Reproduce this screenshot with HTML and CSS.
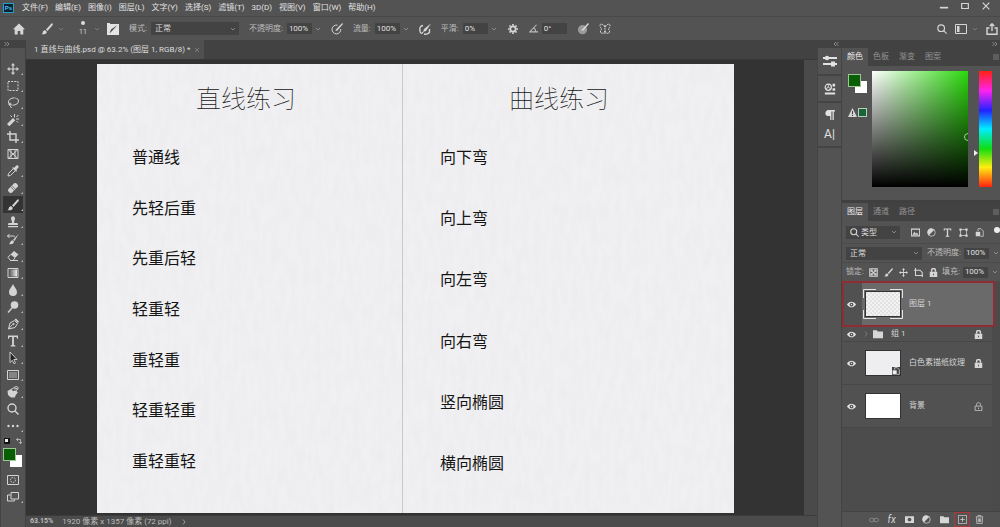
FILE: index.html
```html
<!DOCTYPE html>
<html lang="zh-CN">
<head>
<meta charset="utf-8">
<title>直线与曲线.psd</title>
<link rel="stylesheet" href="styles.css">
</head>
<body>
<svg class="sprite" aria-hidden="true">
  <symbol id="move" viewBox="0 0 12 12"><path d="M6 0l2 2.500H6.600V5.400H9.500V4L12 6 9.500 8V6.600H6.600v2.900H8L6 12 4 9.500h1.400V6.600H2.500V8L0 6l2.500-2v1.400h2.900V2.500H4z"/></symbol>
  <symbol id="marquee" viewBox="0 0 12 12"><path class="ln" d="M1 1.500h10v9H1z" stroke-dasharray="2 1.200"/></symbol>
  <symbol id="lasso" viewBox="0 0 12 12"><ellipse class="ln" cx="6.500" cy="4.500" rx="5" ry="3.500" transform="rotate(-12 6.500 4.500)"/><path class="ln" d="M2 6.500c-1 2 2 2 2 .5s-2-1-1 1.500l1.500 2.500"/></symbol>
  <symbol id="wand" viewBox="0 0 12 12"><path d="M0 10L6 4l2.300 2.300-6 6z"/><path class="ln" d="M7.500 3.500V0M9 5h3M9.500 3L11.500 1M5 3L3.500 1.500M9.500 7l1.500 1.500"/></symbol>
  <symbol id="crop" viewBox="0 0 12 12"><path class="ln2" d="M3 0v9h9M0 3h9v9"/></symbol>
  <symbol id="frame" viewBox="0 0 12 12"><path class="ln" d="M1 1.500h10v9H1zM1 1.500l10 9M11 1.500l-10 9M4 1.500h4v9H4z"/></symbol>
  <symbol id="dropper" viewBox="0 0 12 12"><path d="M7 3l2-2.300c1.500-1.500 3.500.5 2.200 2L9.300 5l.8.800-1 1L5.200 3l1-1z"/><path class="ln" d="M6 4L1.500 8.500 1 11l2.500-.5L8 6"/></symbol>
  <symbol id="heal" viewBox="0 0 12 12"><path d="M1.300 7.200L7.200 1.300c1.500-1.500 5 2 3.500 3.500l-5.900 5.900c-1.500 1.500-5-2-3.500-3.500z"/><path class="cut" d="M3.800 5L7 8.200M5 3.800L8.200 7"/></symbol>
  <symbol id="brush" viewBox="0 0 12 12"><path d="M11.500.500c.7.600.3 1.200-.2 1.900L6.500 8 5 6.600 10 1c.500-.5 1-.9 1.500-.500zM4.300 7.200l1.500 1.500c.2 2.300-2.500 3-5.500 2.500 1.600-.7 1.200-1.500 1.700-2.700.4-1 1.400-1.300 2.300-1.300z"/></symbol>
  <symbol id="stamp" viewBox="0 0 12 12"><path d="M4 2.500C4-.5 8-.5 8 2.500 8 4 7 4.500 7 7h3.500l.5 2H1l.5-2H5C5 4.500 4 4 4 2.500zM1 10h10v1.200H1z"/></symbol>
  <symbol id="history" viewBox="0 0 12 12"><path d="M11.800.8L7.500 8 6 7zM5.500 7.200l1.500 1.500C6.500 11 4 11.500 2 11c1.500-1 1-3 3.500-3.800z"/><path class="ln" d="M0 3h6M2.500 1L.7 3l1.800 2M6 3c1 0 2 0 2 1.500"/></symbol>
  <symbol id="eraser" viewBox="0 0 12 12"><path d="M7 1l4.500 3.500L8 8 3.500 4.500z"/><path class="ln" d="M3.500 4.500L1 7.300 3.500 10.500H6L8 8M3 10.500h8"/></symbol>
  <symbol id="gradient" viewBox="0 0 12 12"><defs><linearGradient id="gr"><stop offset="0" stop-color="#555"/><stop offset="1" stop-color="#eee"/></linearGradient></defs><path class="ln" d="M1 1.500h10v9H1z"/><path fill="url(#gr)" d="M2 2.500h8v7H2z"/></symbol>
  <symbol id="drop" viewBox="0 0 12 12"><path d="M6 0c1 3 4 5 4 8a4 4 0 0 1-8 0c0-3 3-5 4-8z"/></symbol>
  <symbol id="dodge" viewBox="0 0 12 12"><circle cx="7.500" cy="4" r="3.800"/><path class="ln2" d="M5 7l-4 4.500"/></symbol>
  <symbol id="pen" viewBox="0 0 12 12"><path class="ln" d="M1.500 11L3 5l4.500-2.500 3 3L8 9.500 1.500 11l4-4.500"/><circle cx="6.500" cy="6" r="1"/><path d="M7.500 1.500L9 .500l3 3.200-1 1.300z"/></symbol>
  <symbol id="type" viewBox="0 0 12 12"><path d="M1 .500h10v3.200h-1L9.600 1.900H6.900V10l1.500.5v1H3.600v-1L5.100 10V1.900H2.400L2 3.700H1z"/></symbol>
  <symbol id="arrow" viewBox="0 0 12 12"><path d="M3 0l7 7.500H6.800L8.500 11l-1.500.8-1.700-3.500L3 10.500z" fill="#222" stroke="#ccc"/></symbol>
  <symbol id="rect" viewBox="0 0 12 12"><path class="ln" d="M.5 1.500h11v9H.5z"/><path d="M2 3h8v6H2z" fill="#858585"/></symbol>
  <symbol id="rotate3d" viewBox="0 0 12 12"><path d="M.5 5l3.500-2 2 2 3-.5 1.800 2-2 2.500-1 2.500H4L1 9z"/><path class="ln" d="M4 3.500L8 1c2-1 3.500 0 3 2L9 4.500M7 3l3-.5"/></symbol>
  <symbol id="search" viewBox="0 0 12 12"><circle class="ln2" cx="5" cy="5" r="4"/><path class="ln2" d="M8 8l3.500 3.500"/></symbol>
  <symbol id="more" viewBox="0 0 12 12"><circle cx="1.500" cy="6" r="1.200"/><circle cx="6" cy="6" r="1.200"/><circle cx="10.500" cy="6" r="1.200"/></symbol>
  <symbol id="mask" viewBox="0 0 12 12"><path class="ln" d="M.5 1.500h11v9H.5z"/><circle class="ln" cx="6" cy="6" r="2.500" stroke-dasharray="1.500 1"/></symbol>
  <symbol id="screen" viewBox="0 0 12 12"><path class="ln" d="M4 1.500h7.500V8H4zM3.500 4H.5v6h7V8.500"/></symbol>
  <symbol id="home" viewBox="0 0 12 12"><path d="M6 .500L12 6.300h-1.700V11.500H7.300V8H4.700v3.500h-3V6.300H0z"/></symbol>
  <symbol id="preset" viewBox="0 0 12 12"><path d="M0 0h3v1h9v11H0z"/><path d="M10.500 2L5 8l-2.500 2.500L4 6.500z" fill="#484848"/></symbol>
  <symbol id="pressure" viewBox="0 0 12 12"><path class="ln" d="M6.500 2.200A4.400 4.400 0 1 0 9.800 6"/><path d="M11.300 0L12 1 6.500 7.500 4.500 8l.7-1.800z"/></symbol>
  <symbol id="pressurefill" viewBox="0 0 12 12"><circle cx="5.500" cy="6.700" r="4.600" fill="#9a9a9a"/><path d="M11 0L12 1 6.500 7.500 4.500 8l.7-1.800z"/></symbol>
  <symbol id="airbrush" viewBox="0 0 12 12"><path class="ln2" d="M4 2.500C1 3 .5 5 1 8s2 3 3 1M5 11c2 .5 5 0 5.500-2V6"/><path d="M12 .500L7 8l-3 1 1-3z"/></symbol>
  <symbol id="gear" viewBox="0 0 12 12"><circle class="ln3" cx="6" cy="6" r="3.200"/><path class="ln3" d="M6 0v2M6 10v2M0 6h2M10 6h2M1.800 1.800l1.300 1.300M8.900 8.900l1.300 1.300M1.800 10.200l1.300-1.300M8.900 3.100l1.300-1.300"/></symbol>
  <symbol id="angle" viewBox="0 0 12 12"><path class="ln2" d="M10 1L1 10.500h11M6 5c2 1 3 3 3 5.500"/></symbol>
  <symbol id="butterfly" viewBox="0 0 12 12"><path class="ln" d="M6 2v9M6 4C4 1 1 0 1 2.500S3 6 3 6s-2 1-1.500 3S5 11 6 8M6 4c2-3 5-4 5-1.500S9 6 9 6s2 1 1.500 3S7 11 6 8" stroke-dasharray="2 .7"/></symbol>
  <symbol id="workspace" viewBox="0 0 12 12"><path class="ln" d="M.5 1.500h11v9H.5z"/><path d="M2 3h2.500v6H2z"/></symbol>
  <symbol id="share" viewBox="0 0 12 12"><path class="ln2" d="M3.500 5H1v6.300h10V5H8.500M6 8V1M3.800 3L6 .800 8.200 3"/></symbol>
  <symbol id="caret" viewBox="0 0 12 12"><path class="ln2" d="M2 4l4 4 4-4"/></symbol>
  <symbol id="chev" viewBox="0 0 12 12"><path class="ln2" d="M1 2l4 4-4 4M6 2l4 4-4 4"/></symbol>
  <symbol id="right" viewBox="0 0 12 12"><path class="ln2" d="M4 1l4 5-4 5"/></symbol>
  <symbol id="menu" viewBox="0 0 12 12"><path class="ln2" d="M0 2h12M0 6h12M0 10h12"/></symbol>
  <symbol id="sliders" viewBox="0 0 14 14"><path class="ln3" d="M0 4h14M0 10h14"/><circle cx="4" cy="4" r="2.200"/><path d="M8 7.500h4v5H8z"/></symbol>
  <symbol id="library" viewBox="0 0 14 14"><circle class="ln2" cx="5" cy="5" r="3.600"/><path class="ln" d="M5 2v3l2.500 1.500M5 5L2.500 6.500"/><path d="M10 1h3v3h-3zM10 6h3v3h-3zM1 11h12v2.500H1z"/></symbol>
  <symbol id="para" viewBox="0 0 12 12"><path d="M11 1v1.500H9.800V11H8.500V2.500H7.400V11H6.200V7C2 7.500 1 5.500 1.500 3.500S3.500 1 5 1z"/></symbol>
  <symbol id="warn" viewBox="0 0 12 12"><path d="M6 0l6 12H0z"/><path d="M5.300 4h1.400v4H5.300zM5.300 9h1.400v1.500H5.300z" fill="#444"/></symbol>
  <symbol id="image" viewBox="0 0 12 12"><path class="ln2" d="M.5 1.500h11v9H.5z"/><path d="M2 9l2.500-4 2 2.500L8 6l2 3z"/></symbol>
  <symbol id="half" viewBox="0 0 12 12"><circle class="ln" cx="6" cy="6" r="5"/><path d="M9.500 2.500A5 5 0 1 0 2.500 9.500z"/></symbol>
  <symbol id="shape" viewBox="0 0 12 12"><path class="ln" d="M2 2h8v8H2z"/><path d="M.5.500h3v3h-3zM8.500.500h3v3h-3zM.5 8.500h3v3h-3zM8.500 8.500h3v3h-3z"/></symbol>
  <symbol id="smart" viewBox="0 0 12 12"><path class="ln" d="M4 4V1h4l3 3v7H7"/><path d="M1 5h6v6H1z"/></symbol>
  <symbol id="checker" viewBox="0 0 12 12"><path class="ln2" d="M1 1h10v10H1z"/><path d="M2 2h3v3H2zM7 2h3v3H7zM4.500 4.500h3v3h-3zM2 7h3v3H2zM7 7h3v3H7z"/></symbol>
  <symbol id="artboard" viewBox="0 0 12 12"><path class="ln2" d="M2 0v10h10M0 3h8l3 3v6"/></symbol>
  <symbol id="lock" viewBox="0 0 12 12"><path d="M1 5h10v7H1z"/><path class="ln3" d="M3.500 5V3c0-3 5-3 5 0v2"/><path d="M5.400 7.500h1.200v2H5.400z" fill="#444"/></symbol>
  <symbol id="lockopen" viewBox="0 0 12 12"><path class="ln" d="M1.500 5.500h9v6h-9zM3.500 5V3c0-3 5-3 5 0v2M6 7.500v2"/></symbol>
  <symbol id="eye" viewBox="0 0 12 12"><path d="M0 6c3-5 9-5 12 0-3 5-9 5-12 0z"/><circle cx="6" cy="6" r="2.500" fill="#4b4b4b"/><circle cx="6" cy="6" r="1"/></symbol>
  <symbol id="folder" viewBox="0 0 12 12"><path d="M0 1.500h4.500l1.200 1.500H12v8H0z"/></symbol>
  <symbol id="link" viewBox="0 0 12 12"><ellipse class="ln" cx="3.500" cy="6" rx="3" ry="2.200"/><ellipse class="ln" cx="8.500" cy="6" rx="3" ry="2.200"/></symbol>
  <symbol id="addmask" viewBox="0 0 12 12"><path fill-rule="evenodd" d="M0 1.500h12v9H0zM6 3.500a2.500 2.500 0 1 0 .01 0z"/></symbol>
  <symbol id="plus" viewBox="0 0 12 12"><path class="ln" d="M.5.500h11v11H.5zM6 3v6M3 6h6"/></symbol>
  <symbol id="trash" viewBox="0 0 12 12"><path class="ln" d="M1 2.500h10M4 2V.500h4V2M2 3l.5 8.500h7L10 3M4.500 4.500v5M6 4.500v5M7.500 4.500v5"/></symbol>
  <symbol id="close" viewBox="0 0 12 12"><path class="ln2" d="M2 2l8 8M10 2L2 10"/></symbol>
  <symbol id="minus" viewBox="0 0 12 12"><path class="ln3" d="M1 8h10"/></symbol>
  <symbol id="max" viewBox="0 0 12 12"><path class="ln2" d="M2 3h8v6H2z"/></symbol>
  <symbol id="swap" viewBox="0 0 12 12"><path class="ln2" d="M4 0L1 3l3 3M1 3h8v8M6 8l3 3.500L12 8"/></symbol>
  <symbol id="corners" viewBox="0 0 40 30"><path class="ln" d="M.5 9V.5H13M27 .5h12.500V9M39.500 21v8.500H27M13 29.500H.5V21"/></symbol>
</svg>

<div class="app">
  <header class="menubar">
    <span class="logo">Ps</span>
    <nav class="menus" aria-label="主菜单">
      <button>文件(F)</button><button>编辑(E)</button><button>图像(I)</button><button>图层(L)</button><button>文字(Y)</button><button>选择(S)</button><button>滤镜(T)</button><button>3D(D)</button><button>视图(V)</button><button>窗口(W)</button><button>帮助(H)</button>
    </nav>
    <div class="winbtns">
      <button aria-label="最小化"><svg class="i10"><use href="#minus"/></svg></button>
      <button aria-label="最大化"><svg class="i10"><use href="#max"/></svg></button>
      <button aria-label="关闭"><svg class="i10"><use href="#close"/></svg></button>
    </div>
  </header>

  <section class="options" aria-label="画笔选项">
    <button class="home" aria-label="主页"><svg class="i12"><use href="#home"/></svg></button>
    <button class="opt" aria-label="画笔工具"><svg class="i12"><use href="#brush"/></svg><svg class="i6 dim"><use href="#caret"/></svg></button>
    <button class="opt size" aria-label="画笔大小 11"><span class="tip"><i class="dot"></i>11</span><svg class="i6 dim"><use href="#caret"/></svg></button>
    <button class="icon preset" aria-label="画笔设置"><svg class="i12"><use href="#preset"/></svg></button>
    <span class="field"><label for="mode">模式:</label><span class="drop mode"><select id="mode" class="sel"><option>正常</option></select><svg class="i6"><use href="#caret"/></svg></span></span>
    <span class="field"><label for="op">不透明度:</label><span class="num"><input id="op" value="100%"><svg class="i6"><use href="#caret"/></svg></span></span>
    <button class="icon" aria-label="不透明度压力"><svg class="i12"><use href="#pressure"/></svg></button>
    <span class="field"><label for="flow">流量:</label><span class="num"><input id="flow" value="100%"><svg class="i6"><use href="#caret"/></svg></span></span>
    <button class="icon" aria-label="喷枪"><svg class="i12"><use href="#airbrush"/></svg></button>
    <span class="field"><label for="smooth">平滑:</label><span class="num"><input id="smooth" value="0%"><svg class="i6"><use href="#caret"/></svg></span></span>
    <button class="icon" aria-label="平滑选项"><svg class="i10"><use href="#gear"/></svg></button>
    <span class="field angle"><label for="angle" aria-label="角度"><svg class="i8"><use href="#angle"/></svg></label><input id="angle" value="0°"></span>
    <button class="icon" aria-label="大小压力"><svg class="i12"><use href="#pressurefill"/></svg></button>
    <button class="icon" aria-label="对称"><svg class="i12"><use href="#butterfly"/></svg></button>
    <span class="right">
      <button aria-label="搜索"><svg class="i10"><use href="#search"/></svg></button>
      <button class="opt" aria-label="工作区"><svg class="i12"><use href="#workspace"/></svg><svg class="i6 dim"><use href="#caret"/></svg></button>
      <button aria-label="共享"><svg class="i12"><use href="#share"/></svg></button>
    </span>
  </section>

  <div class="body">
    <aside class="tools" aria-label="工具">
      <div class="grip"><svg class="i6"><use href="#chev"/></svg></div>
      <div class="toolset">
        <button class="tool fly" aria-label="移动"><svg><use href="#move"/></svg></button>
        <button class="tool fly" aria-label="选框"><svg><use href="#marquee"/></svg></button>
        <button class="tool fly" aria-label="套索"><svg><use href="#lasso"/></svg></button>
        <button class="tool fly" aria-label="魔棒"><svg><use href="#wand"/></svg></button>
        <button class="tool fly" aria-label="裁剪"><svg><use href="#crop"/></svg></button>
        <button class="tool" aria-label="图框"><svg><use href="#frame"/></svg></button>
        <button class="tool fly" aria-label="吸管"><svg><use href="#dropper"/></svg></button>
        <button class="tool fly" aria-label="修复"><svg><use href="#heal"/></svg></button>
        <button class="tool fly on" aria-label="画笔"><svg><use href="#brush"/></svg></button>
        <button class="tool fly" aria-label="图章"><svg><use href="#stamp"/></svg></button>
        <button class="tool fly" aria-label="历史画笔"><svg><use href="#history"/></svg></button>
        <button class="tool fly" aria-label="橡皮擦"><svg><use href="#eraser"/></svg></button>
        <button class="tool fly" aria-label="渐变"><svg><use href="#gradient"/></svg></button>
        <button class="tool fly" aria-label="模糊"><svg><use href="#drop"/></svg></button>
        <button class="tool fly" aria-label="减淡"><svg><use href="#dodge"/></svg></button>
        <button class="tool fly" aria-label="钢笔"><svg><use href="#pen"/></svg></button>
        <button class="tool fly" aria-label="文字"><svg><use href="#type"/></svg></button>
        <button class="tool fly" aria-label="路径选择"><svg><use href="#arrow"/></svg></button>
        <button class="tool fly" aria-label="矩形"><svg><use href="#rect"/></svg></button>
        <button class="tool fly" aria-label="抓手"><svg><use href="#rotate3d"/></svg></button>
        <button class="tool" aria-label="缩放"><svg><use href="#search"/></svg></button>
        <button class="tool fly" aria-label="更多"><svg><use href="#more"/></svg></button>
      </div>
      <div class="reset"><button class="mini" aria-label="默认颜色"><i></i></button><button aria-label="交换颜色"><svg class="i6"><use href="#swap"/></svg></button></div>
      <div class="swatches"><button class="fg" aria-label="前景色"></button><button class="bg" aria-label="背景色"></button></div>
      <button class="tool" aria-label="快速蒙版"><svg><use href="#mask"/></svg></button>
      <button class="tool fly" aria-label="屏幕模式"><svg><use href="#screen"/></svg></button>
    </aside>

    <main class="work">
      <div class="tabs"><div class="doctab"><span>1 直线与曲线.psd @ 63.2% (图层 1, RGB/8) *</span><button aria-label="关闭文档"><svg class="i6 dim"><use href="#close"/></svg></button></div></div>
      <div class="view">
        <div class="stage">
          <article class="paper">
            <svg class="grain" aria-hidden="true"><filter id="fiber"><feTurbulence type="fractalNoise" baseFrequency=".16 .05" numOctaves="3" seed="4"/><feColorMatrix values="0 0 0 0 .45  0 0 0 0 .45  0 0 0 0 .48  .12 0 0 0 -.04"/></filter><rect width="100%" height="100%" filter="url(#fiber)"/></svg>
            <section class="page first"><h1>直线练习</h1><ul><li>普通线</li><li>先轻后重</li><li>先重后轻</li><li>轻重轻</li><li>重轻重</li><li>轻重轻重</li><li>重轻重轻</li></ul></section>
            <section class="page"><h1>曲线练习</h1><ul><li>向下弯</li><li>向上弯</li><li>向左弯</li><li>向右弯</li><li>竖向椭圆</li><li>横向椭圆</li></ul></section>
          </article>
        </div>
        <div class="scroll"></div>
      </div>
      <footer class="status"><b>63.15%</b><span>1920 像素 x 1357 像素 (72 ppi)</span><svg class="i6"><use href="#right"/></svg></footer>
    </main>

    <aside class="dock">
      <div class="grip end"><svg class="i6 flip"><use href="#chev"/></svg></div>
      <div class="dockbox"><button aria-label="属性"><svg class="i14"><use href="#sliders"/></svg></button></div>
      <div class="dockbox"><button aria-label="库"><svg class="i12"><use href="#library"/></svg></button></div>
      <div class="dockbox"><button aria-label="段落"><svg class="i12"><use href="#para"/></svg></button><button class="char" aria-label="字符">A|</button></div>
    </aside>

    <aside class="panels">
      <div class="grip end"><svg class="i6"><use href="#chev"/></svg></div>
      <section class="colorpanel">
        <div class="ptabs"><button class="on">颜色</button><button>色板</button><button>渐变</button><button>图案</button><svg class="i6 pm"><use href="#menu"/></svg></div>
        <div class="picker">
          <div class="chips"><div class="swatches"><button class="fg" aria-label="前景色"></button><button class="bg" aria-label="背景色"></button></div><div class="gamut"><svg class="i8"><use href="#warn"/></svg><i></i></div></div>
          <div class="sv"><i class="ring"></i></div>
          <div class="hue"><i class="knob"></i></div>
        </div>
      </section>
      <section class="layers">
        <div class="ptabs"><button class="on">图层</button><button>通道</button><button>路径</button><svg class="i6 pm"><use href="#menu"/></svg></div>
        <div class="row filter"><span class="drop kind"><svg class="i8 lens"><use href="#search"/></svg><select class="sel" aria-label="过滤类型"><option>类型</option></select><svg class="i6"><use href="#caret"/></svg></span>
          <span class="ficons"><svg class="i8"><use href="#image"/></svg><svg class="i8"><use href="#half"/></svg><svg class="i8"><use href="#type"/></svg><svg class="i8"><use href="#shape"/></svg><svg class="i8"><use href="#smart"/></svg></span><i class="toggle"></i></div>
        <div class="row"><span class="drop blend"><select class="sel" aria-label="混合模式"><option>正常</option></select><svg class="i6"><use href="#caret"/></svg></span><label for="lop">不透明度:</label><span class="num"><input id="lop" value="100%"><svg class="i6"><use href="#caret"/></svg></span></div>
        <div class="row locks"><span>锁定:</span><span class="licons"><svg class="i8"><use href="#checker"/></svg><svg class="i8"><use href="#brush"/></svg><svg class="i8"><use href="#move"/></svg><svg class="i8"><use href="#artboard"/></svg><svg class="i8"><use href="#lock"/></svg></span><label for="fill">填充:</label><span class="num"><input id="fill" value="100%"><svg class="i6"><use href="#caret"/></svg></span></div>
        <ul class="list">
          <li class="layer sel1"><svg class="i8 eye"><use href="#eye"/></svg><div class="lbody"><span class="thumb clear"><svg class="corners"><use href="#corners"/></svg></span><span class="name">图层 1</span></div></li>
          <li class="layer group"><svg class="i8 eye"><use href="#eye"/></svg><div class="lbody"><svg class="i6 dim"><use href="#right"/></svg><svg class="i10"><use href="#folder"/></svg><span class="name">组 1</span><svg class="i8"><use href="#lock"/></svg></div></li>
          <li class="layer"><svg class="i8 eye"><use href="#eye"/></svg><div class="lbody"><span class="thumb tex"><svg class="badge"><use href="#smart"/></svg></span><span class="name">白色素描纸纹理</span><svg class="i8"><use href="#lock"/></svg></div></li>
          <li class="layer"><svg class="i8 eye"><use href="#eye"/></svg><div class="lbody"><span class="thumb white"></span><span class="name">背景</span><svg class="i8"><use href="#lockopen"/></svg></div></li>
        </ul>
        <div class="actions">
          <button class="dim" aria-label="链接"><svg class="i10"><use href="#link"/></svg></button>
          <button class="fx" aria-label="图层样式">fx</button>
          <button aria-label="添加蒙版"><svg class="i8"><use href="#addmask"/></svg></button>
          <button aria-label="调整图层"><svg class="i8"><use href="#half"/></svg></button>
          <button aria-label="新建组"><svg class="i8"><use href="#folder"/></svg></button>
          <button class="marked" aria-label="新建图层"><svg class="i8"><use href="#plus"/></svg></button>
          <button aria-label="删除"><svg class="i8"><use href="#trash"/></svg></button>
        </div>
      </section>
    </aside>
  </div>
</div>
</body>
</html>
```
FILE: styles.css
```css
* { box-sizing: border-box; }
body {
  margin: 0;
  background: #535353;
  color: #d6d6d6;
  font: 8px/12px Roboto, "Noto Sans CJK SC", sans-serif;
}
button, input, select { font: inherit; color: inherit; border: 0; margin: 0; padding: 0; background: none; }
button { display: flex; align-items: center; justify-content: center; white-space: nowrap; }
ul { list-style: none; margin: 0; padding: 0; }
svg { display: block; flex: none; fill: currentColor; }
.sprite { position: absolute; width: 0; height: 0; }
.ln, .ln2, .ln3, .cut { fill: none; stroke: currentColor; stroke-width: 1; }
.ln2 { stroke-width: 1.4; }
.ln3 { stroke-width: 2; }
.cut { stroke: #777; }
.i6 { width: 6px; height: 6px; }
.i8 { width: 9px; height: 9px; }
.i10 { width: 10px; height: 10px; }
.i12 { width: 12px; height: 12px; }
.i14 { width: 14px; height: 14px; }
.dim { color: #8c8c8c; }
.flip { transform: scaleX(-1); }

.app { display: flex; flex-direction: column; height: 100vh; }

/* Menu bar */
.menubar { display: flex; align-items: center; height: 17px; padding-left: 3px; border-bottom: 1px solid #484848; }
.logo { width: 11px; height: 10px; border: 1px solid #2a9fc9; background: #0a2333; color: #4fc3ee; font: bold 6px/8px "Liberation Sans", sans-serif; text-align: center; }
.menus { display: flex; gap: 7px; margin-left: 8px; color: #e2e2e2; }
.winbtns { display: flex; gap: 11px; margin: 0 9px 5px auto; }

/* Options bar */
.options { display: flex; align-items: center; gap: 10px; height: 23px; padding: 0 2px 0 13px; }
.home { margin-right: 6px; }
.opt { gap: 5px; }
.opt.size { margin: 0 -3px 0 3px; }
.tip { display: flex; flex-direction: column; align-items: center; width: 12px; font-size: 7px; line-height: 8px; }
.dot { width: 4px; height: 4px; margin: 0 0 3px; border-radius: 50%; background: #ddd; }
.preset { color: #e4e4e4; }
.field { display: flex; align-items: center; gap: 4px; color: #bdbdbd; }
.drop { display: flex; align-items: center; height: 13px; padding-right: 3px; background: #434343; color: #a5a5a5; }
.sel { appearance: none; flex: 1; min-width: 0; height: 13px; padding: 0 4px; line-height: 13px; color: #dedede; }
.mode { width: 88px; }
.num { display: flex; align-items: center; gap: 3px; color: #a5a5a5; }
.num input, .angle input { width: 25px; height: 11px; padding: 0 2px; background: #434343; color: #e0e0e0; }
.icon { width: 12px; }
.options .right { display: flex; align-items: center; gap: 8px; margin-left: auto; }

/* Body */
.body { display: flex; flex: 1; min-height: 0; }
.grip { display: flex; align-items: center; height: 8px; padding: 0 3px; background: #424242; color: #aaa; }
.grip.end { justify-content: flex-end; padding: 0 2px; }
.tools { display: flex; flex-direction: column; flex: none; width: 26px; border-left: 1px solid #444; border-right: 1px solid #414141; }
.toolset { padding-top: 12px; }
.tool { position: relative; width: 20px; height: 17px; margin-left: 2px; color: #d4d4d4; }
.tool svg { width: 12px; height: 12px; }
.tool.fly::after { content: ""; position: absolute; right: 0; bottom: 2px; border: 1px solid; border-color: transparent #bbb #bbb transparent; }
.tool.on { background: #333; }
.reset { display: flex; gap: 6px; align-items: center; height: 14px; padding-left: 3px; }
.mini { width: 6px; height: 6px; background: #eee; border: 1px solid #111; border-width: 1px 2px 2px 1px; }
.swatches { display: grid; grid-template-columns: 7px 6px 6px; grid-template-rows: 7px 6px 6px; }
.tools .swatches { margin: 0 0 4px 2px; }
.fg { grid-area: 1 / 1 / 3 / 3; z-index: 1; background: #0a5f06; border: 1px solid #9bc594; }
.bg { grid-area: 2 / 2 / 4 / 4; background: #fff; }

.work { display: flex; flex-direction: column; flex: 1; min-width: 0; }
.tabs { display: flex; height: 20px; background: #424242; border-bottom: 1px solid #383838; }
.doctab { display: flex; align-items: center; gap: 4px; padding: 0 4px 0 8px; background: #505050; color: #dedede; }
.view { display: flex; flex: 1; min-height: 0; }
.stage { display: flex; flex: 1; padding: 4px 70px 2px 71px; background: #333; }
.scroll { width: 13px; background: #4a4a4a; }
.paper { display: grid; grid-template-columns: 306fr 331fr; flex: 1; position: relative; background: #f0f0f2; color: #151515; font-family: "Noto Sans CJK SC", sans-serif; }
.grain { position: absolute; inset: 0; width: 100%; height: 100%; }
.page { display: flex; flex-direction: column; position: relative; padding: 21px 0 43px 37px; }
.page.first { padding: 21px 0 45px 35px; border-right: 1px solid #c9c9cb; }
.page h1 { margin: 0 0 38px; padding-right: 56px; font-weight: 100; font-size: 25px; line-height: 25px; text-align: center; }
.page.first h1 { padding-right: 42px; }
.page ul { display: flex; flex: 1; flex-direction: column; justify-content: space-between; font-size: 16px; line-height: 16px; }
.status { display: flex; align-items: center; height: 12px; padding-left: 4px; gap: 9px; background: #4b4b4b; color: #bcbcbc; border-top: 1px solid #3c3c3c; line-height: 11px; }
.status b { font-size: 7px; }

/* Collapsed dock */
.dock { flex: none; width: 25px; border: 1px solid #444; border-width: 0 1px; }
.dockbox { display: flex; flex-direction: column; align-items: center; justify-content: center; gap: 7px; min-height: 27px; padding: 6px 0; border-bottom: 2px solid #444; color: #e2e2e2; }
.char { font-size: 12px; }

/* Panels */
.panels { display: flex; flex-direction: column; flex: none; width: 158px; }
.ptabs { display: flex; align-items: stretch; height: 18px; background: #424242; color: #929292; }
.ptabs button { width: 26px; }
.ptabs .on { background: #535353; color: #eee; }
.pm { margin: 6px 1px 0 auto; }
.colorpanel { border-bottom: 3px solid #404040; }
.picker { display: flex; height: 134px; padding: 5px 8px 13px 6px; }
.chips { width: 24px; padding-top: 3px; }
.gamut { display: flex; gap: 1px; margin-top: 15px; }
.gamut i { width: 9px; height: 9px; background: #1b6338; border: 1px solid #b4cfbd; }
.sv { position: relative; flex: 1; background: linear-gradient(to top, #000, transparent), linear-gradient(to right, #fff, #2bd80c); overflow: hidden; }
.ring { position: absolute; right: -4px; top: 62px; width: 8px; height: 8px; border: 1px solid #aac8a0; border-radius: 50%; }
.hue { position: relative; width: 13px; margin-left: 11px; background: linear-gradient(#f21, #f2e 17%, #22f 34%, #0ef 50%, #1d1 67%, #fe1 83%, #f21); }
.knob { position: absolute; left: -5px; top: 79px; border: 3px solid transparent; border-left: 4px solid #eee; border-right: 0; }

.layers { display: flex; flex: 1; flex-direction: column; min-height: 0; }
.row { display: flex; align-items: center; height: 19px; padding-left: 4px; color: #bdbdbd; border-bottom: 1px solid #4b4b4b; }
.row .num { gap: 4px; margin-left: 3px; }
.filter { height: 23px; }
.kind { width: 54px; padding-left: 4px; }
.lens { color: #d6d6d6; }
.kind .sel { padding: 0 0 0 2px; }
.ficons { display: flex; gap: 7px; margin-left: 11px; color: #d6d6d6; }
.toggle { width: 6px; height: 6px; margin: 0 0 5px auto; border-radius: 50%; background: #eee; }
.blend { width: 76px; margin-right: 5px; }
.licons { display: flex; gap: 6px; margin: 0 4px 0 5px; color: #d6d6d6; }
.locks { height: 18px; border-bottom: 0; }
.list { flex: 1; background: #4c4c4c; border-right: 8px solid #4b4b4b; }
.layer { display: flex; align-items: stretch; height: 43px; border-bottom: 1px solid #474747; background: #515151; }
.eye { align-self: center; margin: 0 6px 0 5px; color: #e4e4e4; }
.lbody { display: flex; flex: 1; align-items: center; gap: 8px; padding: 0 9px 0 3px; }
.name { flex: 1; }
.sel1 { height: 46px; margin-right: -3px; border: 2px solid #8f2d33; }
.sel1 .eye { margin: 0 6px 0 3px; }
.sel1 .lbody { background: #6a6a6a; }
.group { height: 15px; }
.group .lbody { gap: 4px; padding-left: 1px; }
.group .name { padding-left: 4px; }
.thumb { position: relative; width: 36px; height: 26px; border: 1px solid #333; }
.clear { background: repeating-conic-gradient(#f2f2f2 0 25%, #e2e2e2 0 50%) 0 0 / 4px 4px; }
.corners { position: absolute; left: -3px; top: -3px; width: 40px; height: 30px; color: #e6e6e6; }
.tex { background: #eeeef0; }
.white { background: #fff; }
.badge { position: absolute; right: 0; bottom: 0; width: 8px; height: 8px; background: #444; color: #eee; }
.actions { display: flex; align-items: center; height: 16px; padding: 0 12px 0 24px; justify-content: space-between; border-top: 1px solid #444; }
.actions button { width: 16px; height: 14px; }
.fx { font-style: italic; font-size: 10px; }
.actions .marked { height: 15px; border: 1px solid #b0353c; }
```
